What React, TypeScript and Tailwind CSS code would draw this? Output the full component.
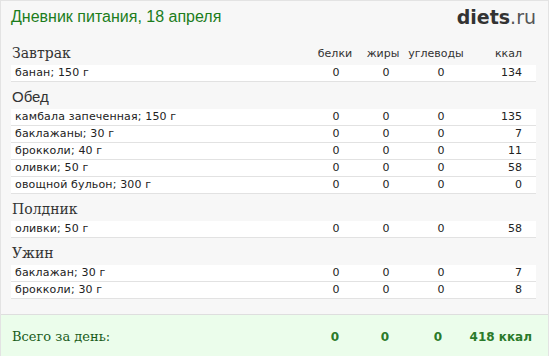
const sans = "font-['DejaVu_Sans',Verdana,sans-serif]";
const arial = "font-['Liberation_Sans',Arial,sans-serif]";
const serif = "font-['DejaVu_Serif',Georgia,serif]";

type Item = { name: string; kcal: number };
type Meal = { title: string; sansTitle?: boolean; items: Item[] };

const meals: Meal[] = [
  { title: 'Завтрак', items: [{ name: 'банан; 150 г', kcal: 134 }] },
  {
    title: 'Обед',
    sansTitle: true,
    items: [
      { name: 'камбала запеченная; 150 г', kcal: 135 },
      { name: 'баклажаны; 30 г', kcal: 7 },
      { name: 'брокколи; 40 г', kcal: 11 },
      { name: 'оливки; 50 г', kcal: 58 },
      { name: 'овощной бульон; 300 г', kcal: 0 },
    ],
  },
  { title: 'Полдник', items: [{ name: 'оливки; 50 г', kcal: 58 }] },
  {
    title: 'Ужин',
    items: [
      { name: 'баклажан; 30 г', kcal: 7 },
      { name: 'брокколи; 30 г', kcal: 8 },
    ],
  },
];

function Row({ item }: { item: Item }) {
  return (
    <div className={`flex items-center h-[17px] bg-white border-b border-[#e2e2e2] text-[11px] text-[#222] ${sans}`}>
      <div className="flex-1 pl-[4px] tracking-[0.15px]">{item.name}</div>
      <div className="w-[50px] text-center">0</div>
      <div className="w-[50px] text-center">0</div>
      <div className="w-[60px] text-center">0</div>
      <div className="w-[51px] text-right pr-[14px] box-content">{item.kcal}</div>
    </div>
  );
}

export default function App() {
  return (
    <div className="w-[549px] h-[357px] border border-[#e3e3e3] bg-[#f7f7f7] flex flex-col overflow-hidden">
      <div className="flex items-center justify-between h-[32px] pl-[10px] pr-[12px]">
        <div className={`text-[16px] text-[#1c7d1c] ${arial}`}>Дневник питания, 18 апреля</div>
        <div className={`text-[19px] text-[#333] ${sans}`}>
          <span className="font-bold">diets</span>
          <span className="text-[#555]">.ru</span>
        </div>
      </div>

      <div className="flex flex-col pl-[10px] pr-[12px]">
        {meals.map((meal, i) => (
          <div key={meal.title} className="flex flex-col">
            <div className={`flex items-end ${i === 0 ? 'h-[32px]' : 'h-[27px]'}`}>
              <div
                className={`flex-1 pl-[1px] leading-none text-[#333] ${
                  meal.sansTitle ? `${arial} text-[15px] pb-[5px]` : `${serif} text-[14px] pb-[5px]`
                }`}
              >
                {meal.title}
              </div>
              {i === 0 && (
                <div className={`flex leading-none text-[11px] text-[#333] pb-[6px] ${sans}`}>
                  <div className="w-[50px] text-center">белки</div>
                  <div className="w-[46px] text-center">жиры</div>
                  <div className="w-[60px] text-center">углеводы</div>
                  <div className="w-[56px] text-right pr-[14px] box-content">ккал</div>
                </div>
              )}
            </div>
            {meal.items.map((it) => (
              <Row key={it.name} item={it} />
            ))}
          </div>
        ))}
      </div>

      <div className="mt-auto h-[42px] border-t border-[#dedede] bg-[#ebfdeb] flex items-center pl-[10px] pr-[16px] pt-[3px]">
        <div className={`flex-1 pl-[1px] text-[13px] text-[#1a5c1a] ${serif}`}>Всего за день:</div>
        <div className={`flex text-[12px] font-bold text-[#2a7a2a] ${sans}`}>
          <div className="w-[42px] text-center">0</div>
          <div className="w-[58px] text-center">0</div>
          <div className="w-[48px] text-center">0</div>
          <div className="w-[70px] text-right">418 ккал</div>
        </div>
      </div>
    </div>
  );
}
